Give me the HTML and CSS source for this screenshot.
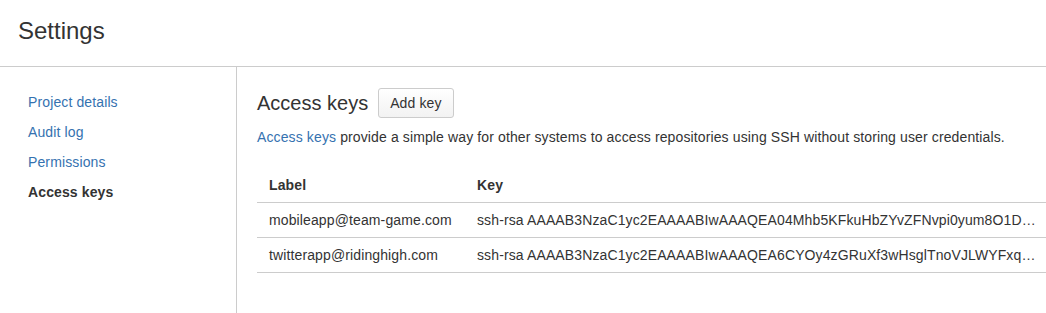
FILE: index.html
```html
<!DOCTYPE html>
<html lang="en">
<head>
    <meta charset="UTF-8">
    <title>Settings - Access keys</title>
    <link rel="stylesheet" href="styles.css">
</head>
<body>

    <header class="page-header">
        <h1>Settings</h1>
    </header>

    <div class="page-body">
        <!-- Sidebar navigation -->
        <nav class="sidebar">
            <a class="nav-item" href="#">Project details</a>
            <a class="nav-item" href="#">Audit log</a>
            <a class="nav-item" href="#">Permissions</a>
            <a class="nav-item active" href="#">Access keys</a>
        </nav>

        <main class="content">
            <div class="content-header">
                <h2>Access keys</h2>
                <button class="button">Add key</button>
            </div>

            <p class="description"><a href="#">Access keys</a> provide a simple way for other systems to access repositories using SSH without storing user credentials.</p>

            <table class="keys-table">
                <colgroup>
                    <col class="col-label">
                    <col>
                </colgroup>
                <thead>
                    <tr>
                        <th>Label</th>
                        <th>Key</th>
                    </tr>
                </thead>
                <tbody>
                    <tr>
                        <td>mobileapp@team-game.com</td>
                        <td class="key">ssh-rsa AAAAB3NzaC1yc2EAAAABIwAAAQEA04Mhb5KFkuHbZYvZFNvpi0yum8O1D…</td>
                    </tr>
                    <tr>
                        <td>twitterapp@ridinghigh.com</td>
                        <td class="key">ssh-rsa AAAAB3NzaC1yc2EAAAABIwAAAQEA6CYOy4zGRuXf3wHsglTnoVJLWYFxq…</td>
                    </tr>
                </tbody>
            </table>
        </main>
    </div>

</body>
</html>
```

FILE: styles.css
```css
/* General */
body {
    margin: 0;
    font-family: "Liberation Sans", Arial, sans-serif;
    font-size: 14px;
    line-height: 20px;
    letter-spacing: 0.12px;
    color: #333;
    background-color: #fff;
}

a {
    color: #3572b0;
    text-decoration: none;
}

/* Header */
.page-header {
    height: 67px;
    padding: 16px 18px 0;
    box-sizing: border-box;
    border-bottom: 1px solid #ccc;
}

.page-header h1 {
    margin: 0;
    font-size: 24px;
    line-height: 30px;
    font-weight: normal;
    letter-spacing: 0;
}

/* Layout */
.page-body {
    display: flex;
    min-height: 246px;
}

.sidebar {
    width: 208px;
    flex-shrink: 0;
    padding: 20px 0 0 28px;
    border-right: 1px solid #ccc;
    display: flex;
    flex-direction: column;
}

.nav-item {
    padding: 5px 0;
}

.nav-item.active {
    color: #333;
    font-weight: bold;
}

.content {
    flex: 1;
    min-width: 0;
    padding: 21px 0 0 20px;
}

.content-header {
    display: flex;
    align-items: center;
    gap: 10px;
    height: 30px;
}

.content-header h2 {
    margin: 0;
    font-size: 20px;
    font-weight: normal;
    line-height: 24px;
    letter-spacing: 0;
}

.button {
    height: 30px;
    padding: 0 11px;
    font-family: inherit;
    font-size: 14px;
    letter-spacing: inherit;
    color: #333;
    background: linear-gradient(#fff, #f2f2f2);
    border: 1px solid #ccc;
    border-radius: 3px;
}

.description {
    margin: 9px 0 0;
}

/* Table */
.keys-table {
    width: 100%;
    margin-top: 21px;
    border-collapse: collapse;
    table-layout: fixed;
}

.col-label {
    width: 208px;
}

.keys-table th,
.keys-table td {
    padding: 7px 12px;
    text-align: left;
    border-bottom: 1px solid #ccc;
    white-space: nowrap;
}

.keys-table th {
    font-weight: bold;
}

.keys-table td.key {
    overflow: hidden;
    text-overflow: ellipsis;
    padding-right: 10px;
}
```
